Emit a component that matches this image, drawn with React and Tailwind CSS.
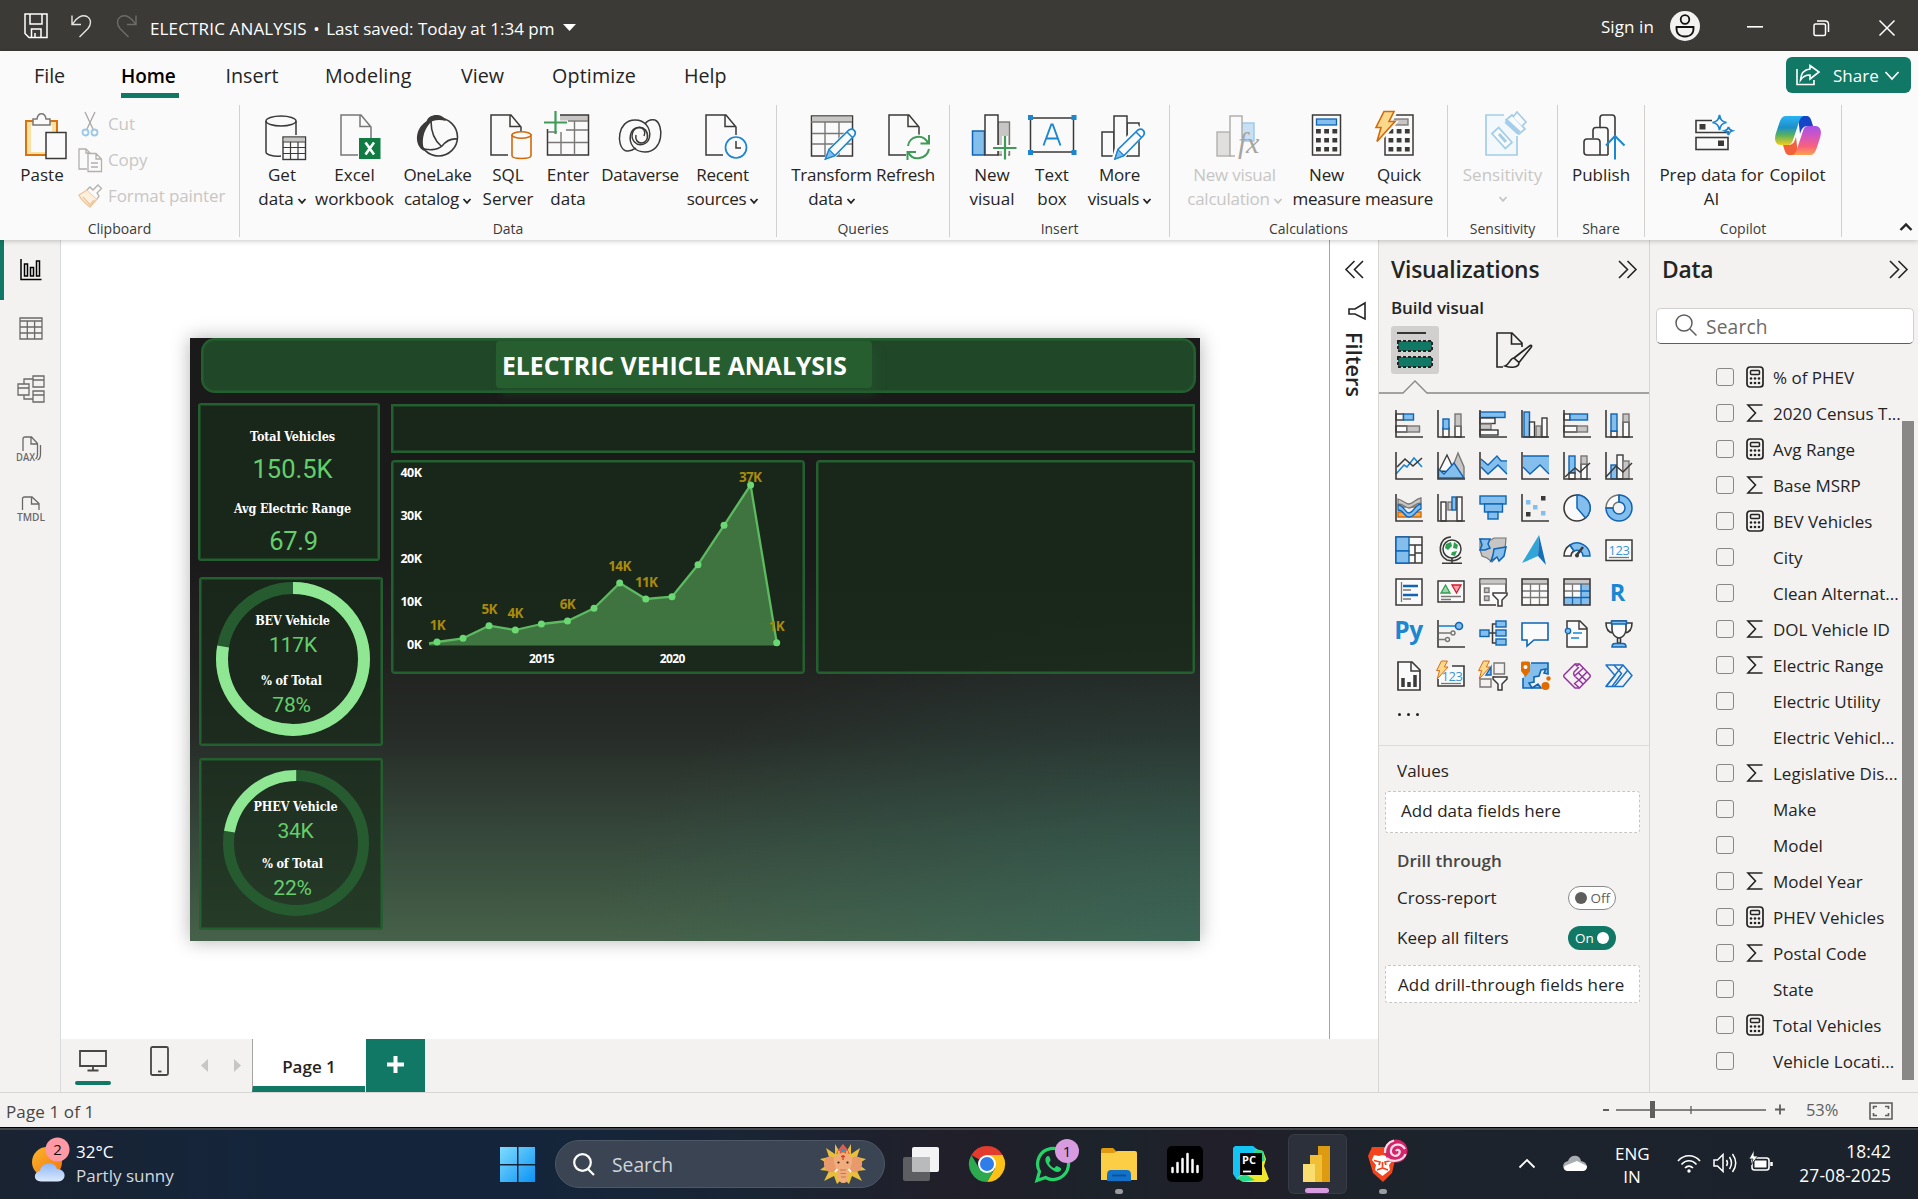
import React from "react";

const D = "#3b3a39";
const BF = "#83beec";
const BS = "#0f64b4";
const GF = "#c8c6c4";
const GS = "#797775";
const W = "#fafafa";

/* ---------- small shared pieces ---------- */

function Svg({ w, h, vb, className = "", children, ...rest }) {
  return (
    <svg width={w} height={h} viewBox={vb || `0 0 ${w} ${h}`} fill="none" className={`block shrink-0 overflow-visible ${className}`} {...rest}>
      {children}
    </svg>
  );
}

function Chevron({ className = "" }) {
  return (
    <Svg w={8} h={6} className={className} stroke="currentColor" strokeWidth="1.8">
      <path d="M0.5 1 L4 4.8 L7.5 1" />
    </Svg>
  );
}

function DoubleChevron({ flip }) {
  return (
    <Svg w={19} h={19} className={flip ? "-scale-x-100" : ""} stroke="#252423" strokeWidth="1.6">
      <path d="M1 1 L9.5 9.5 L1 18 M9.5 1 L18 9.5 L9.5 18" />
    </Svg>
  );
}

/* ---------- ribbon icons, drawn on a 48px grid ---------- */

const Page = ({ x = 8, c = D }) => (
  <path d={`M${x + 30} 26 V15 L${x + 20} 3 H${x} V43 H${x + 17} M${x + 19} 3 V14.500 H${x + 30}`} stroke={c} strokeWidth="1.5" fill={W} />
);

const Bolt = ({ x = 0, y = 0, s = 1 }) => (
  <path transform={`translate(${x} ${y}) scale(${s})`} d="M9 0 H19 L14 10 H20 L2 30 L6 16 H1 Z" fill="#fbd98c" stroke="#d4690b" strokeWidth="1.6" />
);

const ribbonIcons = {
  getData: (
    <>
      <path d="M8 9 V40 C8 42.500 15 45 23 44 M38 9 V23" stroke={D} strokeWidth="1.5" />
      <ellipse cx="23" cy="9" rx="15" ry="5" stroke={D} strokeWidth="1.5" />
      <rect x="25" y="25" width="22.500" height="22.500" fill={W} stroke={D} strokeWidth="1.4" />
      <rect x="25.700" y="25.700" width="21" height="4" fill={GF} />
      <path d="M25 30 H47.500 M25 35.500 H47.500 M25 41.500 H47.500 M32.500 30 V47.500 M40 30 V47.500" stroke={D} strokeWidth="1.2" />
    </>
  ),
  excel: (
    <>
      <Page x={10} c={GS} />
      <rect x="28" y="26" width="21.500" height="21" fill="#107c41" />
      <path d="M34.500 30.500 L43 42.500 M43 30.500 L34.500 42.500" stroke="#fff" strokeWidth="2.600" />
    </>
  ),
  oneLake: (
    <>
      <circle cx="24.500" cy="25" r="19" stroke={D} strokeWidth="1.6" />
      <path d="M12.500 9.500 C15 1 29 1 32 9 C25 7 18 8 13.500 12.500 Z" fill={D} />
      <path d="M14 9 C1 14 -1 34 10.500 39 C7 30 9 18 17 10 Z" fill={D} />
      <path d="M17 9 C17 21 21 29 27.500 34.500 M43.500 27 C36 26 32 29 28 34 C23 38.500 14 38.500 7 36" stroke={D} strokeWidth="1.6" />
    </>
  ),
  sql: (
    <>
      <Page x={7} />
      <path d="M28 23 V43.500 C28 47.500 47 47.500 47 43.500 V23 Z" fill={W} stroke="#d4690b" strokeWidth="1.6" />
      <ellipse cx="37.500" cy="23" rx="9.500" ry="3.200" fill={W} stroke="#d4690b" strokeWidth="1.6" />
    </>
  ),
  enter: (
    <>
      <rect x="3.500" y="3" width="41" height="40" fill={W} />
      <rect x="16" y="3" width="28" height="5.500" fill={GF} />
      <path d="M16 3 H44.500 V43 H3.500 V17" stroke={D} strokeWidth="1.5" />
      <path d="M24 9 H44 M22 18 H44 M4 30.500 H44 M17 20 V43 M30.500 9 V43 M4 20 H13" stroke={GS} strokeWidth="1.4" />
      <path d="M0 10.500 H23 M11.500 -1 V22" stroke="#3f9b57" strokeWidth="2.200" />
    </>
  ),
  dataverse: (
    <g stroke={D} strokeWidth="1.500">
      <path d="M9 38.500 C0 34 1 8 19 8 C29 8 35 16 33.500 25 C32 33 23 35 18.500 30 C14 25 16 16 23 15.500 C28 15.500 30 20 28 24" />
      <path d="M39 8 C48 12 48 40 29 40 C19 40 12.500 32 14.500 23 C16 15 25 13 29.500 18 C33 23 32 30 26 31 C21 31 19 27 20 23" />
      <path d="M9 38.500 C14 40.500 17 38 20 36 M39 8 C34 7 31 9 29 12" />
    </g>
  ),
  recent: (
    <>
      <Page x={7} />
      <circle cx="37" cy="35.500" r="12.500" fill={W} />
      <circle cx="37" cy="35.500" r="10.500" fill={W} stroke="#1c86d1" strokeWidth="1.7" />
      <path d="M37 29 V36 H42" stroke={D} strokeWidth="1.5" />
    </>
  ),
  transform: (
    <>
      <rect x="3.500" y="4" width="41" height="40" fill={W} stroke={D} strokeWidth="1.5" />
      <rect x="4" y="4.500" width="40" height="5.500" fill={GF} />
      <path d="M3 10 H44 M4 21.500 H44 M4 32 H44 M17 10 V43 M31 10 V43" stroke={GS} strokeWidth="1.4" />
      <path d="M16 48 L20 37 L41 16 L48 21 L28 45 Z" fill={W} />
      <path d="M17.500 47 L21 37.500 L41 18 C45 15.500 49 19.500 46.500 23.500 L27 43.500 Z M39 20 L44.500 25.500" stroke="#1c86d1" strokeWidth="1.6" fill={W} />
      <path d="M17.500 47 L21 37.500 L27 43.500 Z" fill={BF} stroke="#1c86d1" strokeWidth="1.2" />
    </>
  ),
  refresh: (
    <>
      <Page x={7} />
      <circle cx="36" cy="36" r="13.500" fill={W} />
      <path d="M26 34 C27 24 41 21 46 31 M47 23 V31.500 H38.500 M47 37 C45 47 31 50 26.500 40.500 M25.500 48 V40 H34" stroke="#3f9b57" strokeWidth="2" />
    </>
  ),
  newVisual: (
    <>
      <rect x="4.500" y="19" width="12" height="24" fill={BF} stroke={BS} strokeWidth="1.5" />
      <rect x="30" y="10" width="11.500" height="33" fill={GF} stroke={GS} strokeWidth="1.4" />
      <rect x="17" y="3" width="13" height="40" fill={W} stroke={D} strokeWidth="1.5" />
      <path d="M25 36 H48 M37 24 V48" stroke={W} strokeWidth="6" />
      <path d="M25 36 H48.500 M37 24 V47.500" stroke="#3f9b57" strokeWidth="2.200" />
    </>
  ),
  textBox: (
    <>
      <rect x="2.500" y="6" width="43" height="34" stroke={D} strokeWidth="1.5" />
      <g fill="#1c86d1">
        <rect x="0" y="3" width="5" height="5" /><rect x="43.500" y="3" width="5" height="5" />
        <rect x="0" y="38" width="5" height="5" /><rect x="43.500" y="38" width="5" height="5" />
      </g>
      <path d="M15.500 33.500 L23.300 12.500 H24.700 L32.500 33.500 M18 26.500 H30" stroke="#1c86d1" strokeWidth="1.9" />
    </>
  ),
  moreVisuals: (
    <>
      <rect x="6" y="20" width="12" height="24" stroke={D} strokeWidth="1.5" />
      <rect x="31" y="11" width="12" height="33" stroke={D} strokeWidth="1.5" />
      <rect x="18" y="4" width="13" height="40" fill={W} stroke={D} strokeWidth="1.5" />
      <path d="M15 49 L19 36 L42 13 L50 21 L29 46 Z" fill={W} />
      <path d="M19 47 L22 37.500 L42 18 C46 15.500 50 19.500 47.500 23.500 L28 43.500 Z M40 20 L45.500 25.500" stroke="#1c86d1" strokeWidth="1.6" fill={W} />
      <path d="M19 47 L22 37.500 L28 43.500 Z" fill={BF} stroke="#1c86d1" strokeWidth="1.2" />
    </>
  ),
  newCalc: (
    <>
      <rect x="6" y="20" width="13" height="24" fill="#e1dfdd" stroke="#b3b0ad" strokeWidth="1.4" />
      <rect x="31" y="11" width="12" height="18" fill="#c7e0f4" stroke="#9cc7e8" strokeWidth="1.4" />
      <path d="M19 44 V4 H31 V26" stroke="#b3b0ad" strokeWidth="1.5" fill={W} />
      <path d="M18.300 44 H24" stroke="#b3b0ad" strokeWidth="1.5" />
      <text x="27" y="41" fill="#a6a4a2" fontSize="30" fontStyle="italic" fontFamily="Liberation Serif, serif">fx</text>
    </>
  ),
  newMeasure: (
    <>
      <rect x="9.500" y="3" width="28" height="40" stroke={D} strokeWidth="1.5" />
      <rect x="13.500" y="7" width="20" height="6" fill={BF} stroke={BS} strokeWidth="1.3" />
      <g fill={D}>
        {[17, 26, 35].map((y) => [13, 21.200, 29.400].map((x) => <rect key={`${x}-${y}`} x={x} y={y} width="4.800" height="4.500" />))}
      </g>
    </>
  ),
  quickMeasure: (
    <>
      <rect x="10" y="3" width="28" height="40" stroke={D} strokeWidth="1.5" />
      <rect x="15" y="7" width="18" height="6" fill={GF} stroke={GS} strokeWidth="1.3" />
      <g fill={D}>
        {[17, 26, 35].map((y) => [13.500, 21.700, 29.900].map((x) => <rect key={`${x}-${y}`} x={x} y={y} width="4.800" height="4.500" />))}
      </g>
      <path d="M5 -3 H24 L18 9 H24 L4 32 H-3 Z" fill={W} />
      <Bolt x={0} y={-0.5} s={1} />
    </>
  ),
  sensitivity: (
    <g stroke="#a3cde8" strokeWidth="1.7">
      <path d="M25 3 H7 V43 H38 V24" fill="#f3f8fc" />
      <rect x="-4.500" y="-10" width="9" height="20" transform="translate(23 26) rotate(-42)" fill={W} />
      <path d="M20 22 L27 30" strokeWidth="3" />
      <path d="M27 8 L33 3 L46 17 L40 22 Z" fill={W} />
      <path d="M27 9 L40 21" strokeWidth="4.500" />
      <path d="M34 5 L38 0 L47 10 L43 14" fill={W} />
    </g>
  ),
  publish: (
    <g strokeWidth="1.6">
      <path d="M16 26 V18.500 Q16 15.500 19 15.500 H23 V6 Q23 3 26 3 H35 Q38 3 38 6 V24" stroke={D} />
      <path d="M23 15.500 H28 Q31 15.500 31 18.500 V43 M7 30 Q7 27 10 27 H20 Q23 27 23 30 V43 H10 Q7 43 7 40 Z M23 43 H31" stroke={D} />
      <path d="M38 47.500 V24 M29 33.500 L38 24 L47.500 33.500" stroke="#1c86d1" strokeWidth="2" />
    </g>
  ),
  prep: (
    <g>
      <path d="M24 8.500 H8 V20.500 H40 V19" stroke={D} strokeWidth="1.6" />
      <rect x="8" y="25.500" width="32" height="12" stroke={D} strokeWidth="1.6" />
      <rect x="11.500" y="12" width="6" height="5.500" fill={D} />
      <rect x="30" y="28.500" width="6" height="5.500" fill={D} />
      <path d="M31.500 3 C32.500 8 34 9.500 38.500 10.500 C34 11.500 32.500 13 31.500 18 C30.500 13 29 11.500 24.500 10.500 C29 9.500 30.500 8 31.500 3 Z M40.500 15 C41 17.500 42 18 44.500 18.800 C42 19.500 41 20.500 40.500 23 C40 20.500 39 19.500 36.500 18.800 C39 18 40 17.500 40.500 15 Z" stroke="#1c86d1" strokeWidth="1.7" />
    </g>
  ),
  copilot: (
    <>
      <defs>
        <linearGradient id="cpA" x1="0" y1="0" x2="0" y2="1">
          <stop offset="0" stopColor="#2ab4f4" /><stop offset=".4" stopColor="#1d8fc8" /><stop offset=".65" stopColor="#55b060" /><stop offset="1" stopColor="#f2cc20" />
        </linearGradient>
        <linearGradient id="cpB" x1="0" y1="0" x2="0" y2="1">
          <stop offset="0" stopColor="#a452e8" /><stop offset=".4" stopColor="#d857b8" /><stop offset=".7" stopColor="#f8607c" /><stop offset="1" stopColor="#fba350" />
        </linearGradient>
      </defs>
      <path d="M24 4 H32 C35.500 4 36.500 6 37.500 9 L39 14 H34 C29 14 27.500 17 26 22 Z" fill="#1646c8" />
      <path d="M24 43 H16 C12.500 43 11.500 41 10.500 38 L9 33 H14 C19 33 20.500 30 22 25 Z" fill="#f2603c" />
      <path d="M12 4 H30 C27 4.500 26 7 25 10 L19 28 C18 31.500 16.500 33 13 33 H7 C1 33 0 27 2 21 L6 9 C7.500 5.500 9 4 12 4 Z" fill="url(#cpA)" />
      <path d="M36 43 H18 C21 42.500 22 40 23 37 L29 19 C30 15.500 31.500 14 35 14 H41 C47 14 48 20 46 26 L42 38 C40.500 41.500 39 43 36 43 Z" fill="url(#cpB)" />
    </>
  ),
};

function RibbonButton({ icon, lines, width, drop, disabled, tight }) {
  return (
    <div className={`flex shrink-0 flex-col items-center text-[17px] leading-6 ${width} ${tight ? "tracking-[-0.25px]" : ""} ${disabled ? "text-[#c8c6c4]" : "text-[#252423]"}`}>
      <Svg w={48} h={48}>{ribbonIcons[icon]}</Svg>
      <div className="mt-[3px] flex flex-col items-center whitespace-nowrap">
        {lines.map((l, i) => (
          <div key={i} className="flex h-6 items-center">
            {l}
            {drop && i === lines.length - 1 && <Chevron className={l ? "mt-1 ml-1" : ""} />}
          </div>
        ))}
      </div>
    </div>
  );
}

function Group({ label, width, pad, children }) {
  return (
    <div className={`flex h-full shrink-0 flex-col border-r border-[#d2d0ce] ${width}`}>
      <div className={`flex h-[114px] shrink-0 pt-[7px] ${pad}`}>{children}</div>
      <div className="text-center text-[14px] leading-[19px] text-[#3b3a39]">{label}</div>
    </div>
  );
}

function TitleBar() {
  return (
    <header className="flex h-[51px] shrink-0 items-center bg-[#3b3a37] text-[17px] text-white">
      <Svg w={24} h={26} className="ml-6" stroke="#fff" strokeWidth="1.5">
        <path d="M1 1 H23 V24.500 H5 L1 20.500 Z M6 1 V11 H18 V1 M7.500 24 V16 H17 V24 M11 20 V24" />
      </Svg>
      <Svg w={22} h={24} className="ml-[23px]" stroke="#e6e6e6" strokeWidth="1.4">
        <path d="M1 1.500 V10.500 H10 M1.500 10 C5 4 11 0 16 2.500 C21 5.500 20 11 17 14.500 L8.500 23" />
      </Svg>
      <Svg w={22} h={24} className="ml-[22px] -scale-x-100" stroke="#6e6d6b" strokeWidth="1.4">
        <path d="M1 1.500 V10.500 H10 M1.500 10 C5 4 11 0 16 2.500 C21 5.500 20 11 17 14.500 L8.500 23" />
      </Svg>
      <div className="ml-[13px] flex w-[409px] gap-[6.500px] pt-[7px] whitespace-nowrap">
        <span className="tracking-[0.15px]">ELECTRIC ANALYSIS</span>
        <span>•</span>
        <span>Last saved: Today at 1:34 pm</span>
      </div>
      <Svg w={13} h={7} className="mt-1 ml-1"><path d="M0 0 H13 L6.500 7 Z" fill="#fff" /></Svg>
      <div className="flex-1" />
      <span className="mt-[2px] mr-4 tracking-[0.1px]">Sign in</span>
      <Svg w={30} h={30}>
        <circle cx="15" cy="15" r="15" fill="#f3f2f1" />
        <circle cx="15" cy="8.500" r="4.300" stroke="#111" strokeWidth="1.8" />
        <path d="M6.500 16 H23.500 C24 22 21 25.500 15 25.500 C9 25.500 6 22 6.500 16 Z" stroke="#111" strokeWidth="1.8" />
      </Svg>
      <Svg w={16} h={2} className="mt-[2px] ml-[47px]"><rect width="16" height="1.6" fill="#fff" /></Svg>
      <Svg w={16} h={16} className="mt-1 ml-[50px]" stroke="#fff" strokeWidth="1.5">
        <rect x="1" y="4" width="11.500" height="11.500" rx="1.500" /><path d="M4 1 H12 Q15.500 1 15.500 4.500 V12" />
      </Svg>
      <Svg w={16} h={16} className="mt-1 mr-[23px] ml-[50px]" stroke="#fff" strokeWidth="1.5"><path d="M0.500 0.500 L15.500 15.500 M15.500 0.500 L0.500 15.500" /></Svg>
    </header>
  );
}

const tabs = [
  ["File", "ml-[34px] w-[87px]"],
  ["Home", "w-[104.5px]"],
  ["Insert", "w-[99.5px]"],
  ["Modeling", "w-[136px] tracking-[0.15px]"],
  ["View", "w-[91px]"],
  ["Optimize", "w-[132px] tracking-[0.15px]"],
  ["Help", ""],
];

function SmallAction({ icon, label }) {
  return (
    <div className="flex h-9 items-center whitespace-nowrap">
      <div className="w-[30px]">{icon}</div>
      {label}
    </div>
  );
}

function Ribbon() {
  return (
    <section className="relative z-10 flex h-[189px] shrink-0 flex-col bg-[#fafafa] shadow-[0_1px_5px_rgba(0,0,0,0.22)]">
      <div className="flex h-[54px] items-start">
        <nav className="flex pt-[7px] text-[19.700px] leading-[36px] text-[#252423]">
          {tabs.map(([t, w]) => (
            <div key={t} className={w}>
              {t === "Home" ? (
                <div className="h-[40px] w-[58px] border-b-[5px] border-[#117865] text-[19px] font-semibold text-black">
                  <span className="tracking-[-0.1px]">Home</span>
                </div>
              ) : t}
            </div>
          ))}
        </nav>
        <div className="mt-[6px] mr-[7px] ml-auto flex h-9 w-[125px] items-center rounded-md bg-[#117865] pl-[10px] text-[17px] text-white">
          <Svg w={24} h={22} stroke="#fff" strokeWidth="1.6">
            <path d="M1 5 V20.500 H18 V16 M14 1.500 L23 8 L14 15 V11 C9 11 6.500 13 4.500 16 C5 9.500 8 5.500 14 5 Z" />
          </Svg>
          <span className="mt-[2px] ml-[13px]">Share</span>
          <Svg w={14} h={9} className="ml-[6px]" stroke="#fff" strokeWidth="1.7"><path d="M0.500 1 L7 8 L13.500 1" /></Svg>
        </div>
      </div>
      <div className="flex h-[132px]">
        <Group label="Clipboard" width="w-[240px]" pad="">
          <div className="flex w-[78px] flex-col items-center pl-[6px] text-[17px] leading-6 text-[#252423]">
            <Svg w={42} h={48} className="ml-[7px]">
              <rect x="1" y="9" width="31" height="34" fill="#fbe0a4" stroke="#d9730d" strokeWidth="2" />
              <rect x="6" y="13" width="21" height="27" fill={W} />
              <path d="M8 13 V7 H12 C13 0 20 0 21 7 H25 V13 Z" fill={W} stroke={GS} strokeWidth="1.5" />
              <rect x="21" y="20.500" width="20" height="26" fill={W} stroke={D} strokeWidth="1.5" />
            </Svg>
            <div className="mt-[3px]">Paste</div>
          </div>
          <div className="-mt-[6px] text-[17px] tracking-[-0.1px] text-[#c8c6c4]">
            <SmallAction label="Cut" icon={
              <Svg w={24} h={24} strokeWidth="1.3">
                <path d="M7 0 L15 17 M17 0 L9 17" stroke="#a9a7a5" /><circle cx="7.500" cy="20.500" r="3" stroke="#9cc7e8" strokeWidth="1.8" /><circle cx="16.500" cy="20.500" r="3" stroke="#9cc7e8" strokeWidth="1.8" />
              </Svg>} />
            <SmallAction label="Copy" icon={
              <Svg w={24} h={24} stroke="#b3b0ad" strokeWidth="1.3">
                <path d="M9 21 H1 V1 H8 L12 5 V6 M8 1 V5 H12 M10 5.500 H18 L23.500 11 V23.500 H10 Z M18 6 V11 H23 M13 15 H20 M13 19 H20" />
              </Svg>} />
            <SmallAction label="Format painter" icon={
              <Svg w={24} h={24} strokeWidth="1.3">
                <path d="M1 11 L9 6 L19 15 L12 23 C8 20 3 16 1 11 Z" fill="#fdf0dc" stroke="#efc39a" /><path d="M5 13 L12 21 L16 16" stroke="#efc39a" />
                <path d="M9 6 L12 3 L15 6 L20 1 L23.500 4.500 L19 9 L21 12 L19 15" fill={W} stroke="#b3b0ad" />
              </Svg>} />
          </div>
        </Group>
        <Group label="Data" width="w-[537px]" pad="pl-[7px]">
          <RibbonButton icon="getData" lines={["Get", "data"]} width="w-[70px]" drop />
          <RibbonButton icon="excel" lines={["Excel", "workbook"]} width="w-[75px]" />
          <RibbonButton icon="oneLake" lines={["OneLake", "catalog"]} width="w-[91px]" drop tight />
          <RibbonButton icon="sql" lines={["SQL", "Server"]} width="w-[50px]" />
          <RibbonButton icon="enter" lines={["Enter", "data"]} width="w-[70px]" />
          <RibbonButton icon="dataverse" lines={["Dataverse"]} width="w-[74px]" tight />
          <RibbonButton icon="recent" lines={["Recent", "sources"]} width="w-[91px]" drop tight />
        </Group>
        <Group label="Queries" width="w-[173px]" pad="pl-[9px]">
          <RibbonButton icon="transform" lines={["Transform", "data"]} width="w-[91px]" drop tight />
          <RibbonButton icon="refresh" lines={["Refresh"]} width="w-[57px]" tight />
        </Group>
        <Group label="Insert" width="w-[220px]" pad="pl-[12px]">
          <RibbonButton icon="newVisual" lines={["New", "visual"]} width="w-[60px]" />
          <RibbonButton icon="textBox" lines={["Text", "box"]} width="w-[60px]" />
          <RibbonButton icon="moreVisuals" lines={["More", "visuals"]} width="w-[75px]" drop tight />
        </Group>
        <Group label="Calculations" width="w-[278px]" pad="pl-[10px]">
          <RibbonButton icon="newCalc" lines={["New visual", "calculation"]} width="w-[109px]" drop disabled tight />
          <RibbonButton icon="newMeasure" lines={["New", "measure"]} width="w-[75px]" tight />
          <RibbonButton icon="quickMeasure" lines={["Quick", "measure"]} width="w-[70px]" tight />
        </Group>
        <Group label="Sensitivity" width="w-[110px]" pad="justify-center">
          <RibbonButton icon="sensitivity" lines={["Sensitivity", ""]} width="w-[90px]" drop disabled />
        </Group>
        <Group label="Share" width="w-[87px]" pad="justify-center">
          <RibbonButton icon="publish" lines={["Publish"]} width="w-[80px]" />
        </Group>
        <Group label="Copilot" width="w-[197px]" pad="pl-[11px]">
          <RibbonButton icon="prep" lines={["Prep data for", "AI"]} width="w-[111px]" />
          <RibbonButton icon="copilot" lines={["Copilot"]} width="w-[61px]" />
        </Group>
        <Svg w={12} h={8} className="mt-[118px] ml-[58px]" stroke="#252423" strokeWidth="2.400"><path d="M0.500 7 L6 1.500 L11.500 7" /></Svg>
      </div>
    </section>
  );
}

/* ---------- left navigation ---------- */

function SideNav() {
  return (
    <aside className="flex w-[61px] shrink-0 flex-col border-r border-[#d8dbde] bg-[#f3f2f1]">
      <div className="flex h-[60px] items-center border-l-4 border-[#117865] pl-4">
        <Svg w={22} h={22} stroke="#000" strokeWidth="1.500">
          <path d="M1 0 V20.500 H21.500 M4.500 5 H7.500 V17 H4.500 Z M10.500 8.500 H13.500 V17 H10.500 Z M16.500 2 H19.500 V17 H16.500 Z" />
        </Svg>
      </div>
      <div className="flex h-[56px] items-center pl-[19px]">
        <Svg w={24} h={23} stroke="#6b6968" strokeWidth="1.3">
          <path d="M1 1 H23 V22 H1 Z M1 4 H23 M1 10 H23 M1 16 H23 M8.300 4 V22 M15.600 4 V22" />
        </Svg>
      </div>
      <div className="flex h-[66px] items-center pl-[17px]">
        <Svg w={28} h={28} stroke="#6b6968" strokeWidth="1.3">
          <path d="M1 9 H12 V20 H1 Z M1 13 H12 M16 1 H27 V12 H16 Z M16 5 H27 M16 16 H27 V27 H16 Z M16 20 H27 M7 9 V4 H16 M7 20 V24 H16" />
        </Svg>
      </div>
      <div className="flex h-[54px] items-center pl-[16px]">
        <Svg w={28} h={26} stroke="#6b6968" strokeWidth="1.3">
          <path d="M7 15 V3 Q7 1 9 1 H15.500 L21.500 7.500 V18 Q21.500 22 19.500 23 M15 1 V8 H21.500 M24.500 9 V18 Q24.500 23 21.500 24" />
          <text x="0" y="24.500" fontSize="10.500" fill="#6b6968" stroke="none" fontWeight="600" fontFamily="Open Sans, sans-serif" textLength="19" lengthAdjust="spacingAndGlyphs">DAX</text>
        </Svg>
      </div>
      <div className="mt-[3px] flex h-[60px] items-center pl-[17px]">
        <Svg w={28} h={26} stroke="#6b6968" strokeWidth="1.3">
          <path d="M5.500 14 V3 Q5.500 1 7.500 1 H15 L22 7.500 V14 M14.500 1 V8 H22" />
          <text x="0" y="24.500" fontSize="10.500" fill="#6b6968" stroke="none" fontWeight="600" fontFamily="Open Sans, sans-serif" textLength="28" lengthAdjust="spacingAndGlyphs">TMDL</text>
        </Svg>
      </div>
    </aside>
  );
}

/* ---------- report canvas ---------- */

const card = "border-2 border-[#245f2f] bg-[rgba(24,43,26,0.69)] shadow-[inset_0_0_0_1px_rgba(36,95,47,0.5)]";
const serif = "font-['DejaVu_Serif_Condensed','DejaVu_Serif',serif] text-[12.5px] font-bold text-white tracking-[-0.15px]";
const din = "font-['Roboto',sans-serif] text-[#63cf6b]";

const pts = [
  [437, 642], [463, 638.300], [489, 625.700], [515.300, 630], [541.400, 624], [567.500, 621], [594, 608.300],
  [619.700, 583], [645.800, 599], [672, 596.700], [698, 564.700], [724, 525.300], [750.600, 485], [776.700, 642.700],
].map(([x, y]) => [x - 393, y - 462]);

const dataLabels = [
  ["1K", 438, 625], ["5K", 489.600, 609], ["4K", 515.700, 613.300], ["6K", 568, 604],
  ["14K", 620, 566.300], ["11K", 646.600, 582.300], ["37K", 750.600, 477], ["1K", 777, 626],
];

function AreaChart() {
  const line = `36,181.5 ${pts.map((p) => p.join(",")).join(" ")}`;
  return (
    <Svg w={410} h={210} fontFamily="Open Sans, sans-serif" fontSize="12.500" fontWeight="700">
      <polygon points={`36,183.500 ${line} 383.700,183.500`} fill="#5fb560" fillOpacity="0.55" />
      <polyline points={line} stroke="#5dba60" strokeWidth="2.300" strokeLinejoin="round" />
      {pts.map(([x, y], i) => <circle key={i} cx={x} cy={y} r="3.500" fill="#6bd873" />)}
      <g fill="#fff" textAnchor="end" letterSpacing="-0.5">
        {["40K", "30K", "20K", "10K", "0K"].map((t, i) => <text key={t} x="28.500" y={15 + i * 43.100}>{t}</text>)}
      </g>
      <g fill="#fff" textAnchor="middle" fontSize="12" letterSpacing="-0.6">
        <text x="148.600" y="201">2015</text>
        <text x="279.300" y="201">2020</text>
      </g>
      <g fill="#a98b0b" textAnchor="middle" fontSize="13.500" letterSpacing="-0.7">
        {dataLabels.map(([t, x, y], i) => <text key={i} x={x - 393.500} y={y - 462 + 4.700}>{t}</text>)}
      </g>
    </Svg>
  );
}

function Donut({ size, stroke, value, start = 0 }) {
  const r = (size - stroke) / 2;
  const c = 2 * Math.PI * r;
  const mid = size / 2;
  return (
    <Svg w={size} h={size}>
      <circle cx={mid} cy={mid} r={r} stroke="#265a2f" strokeWidth={stroke} />
      <circle cx={mid} cy={mid} r={r} stroke="#8fe793" strokeWidth={stroke}
        transform={`rotate(${start * 360 - 90} ${mid} ${mid})`} strokeDasharray={`${c * value} ${c}`} />
    </Svg>
  );
}

function Report() {
  return (
    <div className="flex h-[603px] w-[1010px] flex-col bg-[radial-gradient(ellipse_60%_56%_at_100%_100%,rgba(52,104,96,0.55)_0%,rgba(52,104,96,0.24)_50%,rgba(52,104,96,0)_100%),linear-gradient(to_bottom,#1a1a1a_0%,#1a1a1a_36%,#212321_54%,#272c28_66%,#35463a_82%,#466149_100%)] shadow-[0_0_18px_rgba(0,0,0,0.3)]">
      <div className="ml-[11px] flex h-[55px] w-[995px] rounded-[14px] border-2 border-[#245f2f] bg-[#214729] shadow-[inset_0_0_0_1px_rgba(36,95,47,0.6)]">
        <div className="mt-[1px] ml-[293px] flex h-[47px] w-[376px] items-center rounded bg-[#265e30] pt-[3px] pl-[6px] text-[24.750px] font-bold whitespace-nowrap text-white shadow-[5px_8px_10px_rgba(38,94,48,0.3)]">
          ELECTRIC VEHICLE ANALYSIS
        </div>
      </div>
      <div className="flex">
        <div className="ml-2 flex w-[193px] flex-col pt-[10px]">
          <div className={`flex h-[158px] w-[182px] flex-col items-center rounded-[3px] pl-[7px] ${card}`}>
            <div className={`mt-[20px] leading-[24px] ${serif}`}>Total Vehicles</div>
            <div className={`mt-[7px] text-[25.500px] leading-[26px] ${din}`}>150.5K</div>
            <div className={`mt-[15px] leading-[24px] ${serif}`}>Avg Electric Range</div>
            <div className={`mt-[7px] ml-[2px] text-[25.500px] leading-[26px] tracking-[-0.3px] ${din}`}>67.9</div>
          </div>
          <div className={`mt-[16px] ml-[1px] grid h-[169px] w-[184px] rounded-[3px] ${card}`}>
            <div className="col-start-1 row-start-1 mt-[3px] ml-[15px]"><Donut size={154} stroke={12} value={0.777} /></div>
            <div className="z-10 col-start-1 row-start-1 flex flex-col items-center pr-[1px] pl-[4px]">
              <div className={`mt-[30px] leading-[24px] ${serif}`}>BEV Vehicle</div>
              <div className={`mt-[1px] ml-[1px] text-[21px] leading-[22px] tracking-[-0.2px] ${din}`}>117K</div>
              <div className={`mt-[13px] mr-[2px] leading-[24px] ${serif}`}>% of Total</div>
              <div className={`mt-[1px] mr-[2px] text-[21px] leading-[22px] tracking-[-0.2px] ${din}`}>78%</div>
            </div>
          </div>
          <div className={`mt-[12px] ml-[1px] grid h-[172px] w-[184px] rounded-[3px] ${card}`}>
            <div className="col-start-1 row-start-1 mt-[10px] ml-[22px]"><Donut size={146} stroke={11} value={0.223} start={0.777} /></div>
            <div className="z-10 col-start-1 row-start-1 flex flex-col items-center pl-[9px]">
              <div className={`mt-[35px] leading-[24px] ${serif}`}>PHEV Vehicle</div>
              <div className={`mt-[1px] text-[21px] leading-[22px] tracking-[-0.2px] ${din}`}>34K</div>
              <div className={`mt-[10px] mr-[6px] leading-[24px] ${serif}`}>% of Total</div>
              <div className={`mt-[1px] mr-[6px] text-[21px] leading-[22px] tracking-[-0.2px] ${din}`}>22%</div>
            </div>
          </div>
        </div>
        <div className="w-[804px] pt-[11px]">
          <div className={`h-[49px] ${card}`} />
          <div className="mt-[7px] flex justify-between">
            <div className={`h-[214px] w-[414px] rounded ${card}`}><AreaChart /></div>
            <div className={`h-[214px] w-[379px] rounded ${card}`} />
          </div>
        </div>
      </div>
    </div>
  );
}

function PageTabs() {
  return (
    <div className="flex h-[53px] shrink-0 bg-[#f3f2f1]">
      <div className="ml-[14px] flex w-[36px] flex-col items-center">
        <Svg w={28} h={22} className="mt-[11px]" stroke="#484644" strokeWidth="1.800">
          <path d="M1 1 H27 V16 H1 Z M14 16 V20.500 M8.500 20.500 H19.500" />
        </Svg>
        <div className="mt-[9px] h-1 w-[36px] rounded-sm bg-[#117865]" />
      </div>
      <Svg w={19} h={30} className="mt-[7px] ml-[39px]" stroke="#484644" strokeWidth="1.800">
        <rect x="1" y="1" width="17" height="28" rx="1.500" /><path d="M8 25.500 H11.500" />
      </Svg>
      <Svg w={7} h={14} className="mt-5 ml-[32px]"><path d="M7 0 V13 L0 6.500 Z" fill="#c8c6c4" /></Svg>
      <Svg w={7} h={14} className="mt-5 ml-[26px]"><path d="M0 0 V13 L7 6.500 Z" fill="#c8c6c4" /></Svg>
      <div className="ml-[11px] flex w-[113px] justify-center border-b-[6px] border-l border-[#117865] border-l-[#a6a4a2] bg-white pt-[15px] text-[17px] leading-[26px] font-semibold text-[#252423]">
        Page 1
      </div>
      <div className="flex w-[60px] items-center justify-center border-l border-white bg-[#117865]">
        <Svg w={17} h={17} className="-mt-[2px]"><path d="M8.500 0 V17 M0 8.500 H17" stroke="#fff" strokeWidth="4" /></Svg>
      </div>
    </div>
  );
}

/* ---------- visualization gallery, each icon on a 28px grid ---------- */

const Axes = () => <path d="M1 0 V27 H28" stroke={D} strokeWidth="1.600" />;
const R = ({ x, y, w, h, k = "w" }) => (
  <rect x={x} y={y} width={w} height={h}
    fill={k === "b" ? BF : k === "g" ? GF : W}
    stroke={k === "b" ? BS : k === "g" ? GS : D} strokeWidth="1.400" />
);

const vizIcons = [
  <><R x={1} y={4} w={7.500} h={6} /><R x={8.500} y={4} w={10} h={6} k="b" /><R x={1} y={16} w={11} h={6} /><R x={12} y={16} w={12.500} h={6} k="g" /><Axes /></>,
  <><R x={6} y={18} w={6} h={9} /><R x={6} y={9} w={6} h={10} k="b" /><R x={18} y={16} w={6} h={11} /><R x={18} y={4} w={6} h={12} k="g" /><Axes /></>,
  <><R x={1} y={2} w={25} h={5.500} k="b" /><R x={1} y={8} w={15} h={5.500} /><R x={1} y={14} w={11} h={5.500} k="g" /><R x={1} y={20} w={18} h={5} /><Axes /></>,
  <><R x={3} y={2} w={5.500} h={25} k="b" /><R x={8.500} y={12} w={5} h={15} /><R x={15} y={16} w={5} h={11} k="g" /><R x={21} y={8} w={5} h={19} /><Axes /></>,
  <><R x={1} y={4} w={6} h={6} /><R x={7} y={4} w={17.500} h={6} k="b" /><R x={1} y={16} w={13} h={6} /><R x={14} y={16} w={10.500} h={6} k="g" /><Axes /></>,
  <><R x={6} y={21} w={6} h={6} /><R x={6} y={4} w={6} h={17} k="b" /><R x={18} y={12} w={6} h={15} /><R x={18} y={4} w={6} h={8} k="g" /><Axes /></>,
  <><path d="M1 22 L9 13 L12 15 L19 6 L27 15" stroke="#1c86d1" strokeWidth="1.600" /><path d="M2 15 L10 7 L18 14 L27 6" stroke={D} strokeWidth="1.600" /><Axes /></>,
  <><path d="M2 19 L10 3 L18 20 Z" fill={W} stroke={D} strokeWidth="1.400" /><path d="M16 14 L21 1 L27 15 V26 H18 Z" fill={GF} stroke={GS} strokeWidth="1.400" /><path d="M1.500 26 V17 L7 22 L17 11 L27 26 Z" fill={BF} stroke={BS} strokeWidth="1.400" /><Axes /></>,
  <><path d="M2 7 L9 13 L18 5 L22 10 H28 V23 L19 14 L9 23 L2 16 Z" fill={BF} /><path d="M2 7 L9 13 L18 4 L22 9 H28 M2 15 L9 22 L19 13 L28 22" stroke={BS} strokeWidth="1.400" /><Axes /></>,
  <><path d="M2 4 H28 V22 L19 13 L9 22 L2 15 Z" fill={BF} /><path d="M2 4 H28 M2 15 L9 22 L19 13 L28 22" stroke={BS} strokeWidth="1.400" /><Axes /></>,
  <><R x={6} y={4} w={6} h={17} k="b" /><R x={6} y={21} w={6} h={6} /><R x={18} y={12} w={6} h={15} /><R x={18} y={4} w={6} h={8} k="g" /><path d="M2 25 L12 16 L17 20 L27 11" stroke={D} strokeWidth="1.500" /><Axes /></>,
  <><R x={6} y={13} w={6} h={14} k="b" /><R x={12} y={3} w={6} h={24} /><R x={18} y={9} w={6} h={18} k="g" /><path d="M1 25 L11 14 L18 20 L27 11" stroke={D} strokeWidth="1.500" /><Axes /></>,
  <><path d="M3 18 H10 C14 22 16 22 19 18 H26 V23 H3 Z M3 13 H26" fill="#f7a94a" stroke="#d4690b" strokeWidth="1.400" /><path d="M3 5 C9 7 11 10 14 10 C18 10 20 5 26 4 V9 C20 9 18 14 14 14 C10 14 9 10 3 10 Z" fill={GF} stroke={GS} strokeWidth="1.300" /><path d="M3 11 C9 11 10 19 14 19 C19 19 19 11 26 10 V15 C21 16 20 23 14 23 C9 23 9 16 3 16 Z" fill={BF} stroke={BS} strokeWidth="1.300" /><Axes /></>,
  <><R x={4} y={8} w={5} h={19} /><R x={11} y={8} w={4} h={8} k="g" /><R x={15} y={3} w={4} h={13} k="b" /><R x={20} y={3} w={5} h={24} /><Axes /></>,
  <><R x={1} y={2} w={26} h={8} k="b" /><R x={5.500} y={10} w={18} h={8} k="b" /><R x={9} y={18} w={10} h={7} k="b" /></>,
  <><Axes /><rect x="5" y="6" width="4.500" height="4.500" fill={BF} /><rect x="12" y="11" width="4.500" height="4.500" fill={BF} /><rect x="20" y="17" width="4.500" height="4.500" fill={BF} /><rect x="20" y="2" width="4.500" height="4.500" fill={D} /><rect x="5" y="18" width="4.500" height="4.500" fill={D} /></>,
  <><circle cx="14" cy="14" r="13" fill={W} stroke={D} strokeWidth="1.600" /><path d="M14 1 A13 13 0 0 1 22.500 24 L14 14 Z" fill={BF} stroke={BS} strokeWidth="1.500" /></>,
  <><circle cx="14" cy="14" r="9.500" stroke={BF} strokeWidth="7" /><path d="M14 4.500 A9.500 9.500 0 0 0 4.500 14" stroke={W} strokeWidth="7" /><path d="M14 1 A13 13 0 0 0 1 14 H8 A6 6 0 0 1 14 8 Z" stroke={GS} strokeWidth="1.500" /><path d="M14 1 A13 13 0 1 1 1 14 H8 A6 6 0 1 0 14 8 Z" stroke={BS} strokeWidth="1.500" /></>,
  <><rect x="1" y="1" width="26" height="26" fill={W} stroke={D} strokeWidth="1.500" /><path d="M14 9 H27 M20 9 V27 M14 19 H20 M20 17 H27" stroke={D} strokeWidth="1.500" /><R x={1} y={1} w={13} h={14} k="b" /><R x={1} y={15} w={13} h={12} k="b" /></>,
  <><circle cx="15" cy="13" r="9" fill="#f8fdf9" stroke={D} strokeWidth="1.500" /><path d="M9 8 L14 6 L15 10 L11 14 L8 12 Z M17 6 L21 9 L20 13 L16 12 Z M15 16 L20 15 L18 20 L14 19 Z" fill="#2f9e52" /><path d="M14 1 C1 1 0 20 10 24 C14 25 20 25 24 21 M15 22 V27 M5 27.200 H25" stroke={D} strokeWidth="1.600" /></>,
  <><path d="M1 3 L12 4 L15 2 H27 L26 14 L22 22 L18 21 L13 26 L8 22 L3 20 L1 14 Z" fill={GF} stroke={GS} strokeWidth="1.200" /><path d="M1 3 L11 3 L9 8 L11 12 L6 14 H1 L3 9 Z M15 13 L27 11 L25 20 L20 25 L18 21 L12 25 L14 19 Z" fill={BF} stroke={BS} strokeWidth="1.500" /></>,
  <><path d="M18 -1 L1 27 L17 20 Z" fill="#2fa5d8" /><path d="M18 -1 L17 20 L25 29 Z" fill="#1470b8" /></>,
  <><path d="M1 20 A13 13 0 0 1 7 9 L11 15 A6 6 0 0 0 8 20 Z" fill={W} stroke={D} strokeWidth="1.500" /><path d="M7 9 A13 13 0 0 1 27 20 H20 A6 6 0 0 0 11 15 Z" fill={BF} stroke={BS} strokeWidth="1.500" /><path d="M20 11 L13 20" stroke={D} strokeWidth="2.500" /><circle cx="14" cy="19.500" r="2" fill={D} /></>,
  <><rect x="1" y="4" width="26" height="20.500" fill={W} stroke={D} strokeWidth="1.500" /><text x="14" y="18.500" textAnchor="middle" fontSize="13" fontFamily="Open Sans, sans-serif" fill="#3a96d6" letterSpacing="-.5">123</text><path d="M4 21.500 H24" stroke={GS} strokeWidth="1.300" /></>,
  <><rect x="1" y="1" width="26" height="26" fill={W} stroke={D} strokeWidth="1.500" /><path d="M6.500 4 V24 M8 12 H16 M8 21 H16" stroke={GS} strokeWidth="1.300" /><path d="M8 8 H23 M8 17 H23" stroke={BS} strokeWidth="2.600" /></>,
  <><rect x="1" y="3" width="26" height="21" fill={W} stroke={D} strokeWidth="1.500" /><path d="M4 15 L8.500 7 L13 15 Z" fill="#9ed6a8" stroke="#2f9e52" strokeWidth="1.300" /><path d="M15 7 H24 L19.500 15 Z" fill="#f7a3a8" stroke="#d9182d" strokeWidth="1.300" /><path d="M4 18.500 H24 M4 21.500 H14" stroke={GS} strokeWidth="1.300" /></>,
  <><path d="M17 27 H1 V1 H27 V14" fill={W} stroke={D} strokeWidth="1.500" /><rect x="1.500" y="1.500" width="25" height="4" fill={GF} /><path d="M1 6 H27" stroke={GS} strokeWidth="1.200" /><R x={5.500} y={10} w={4.500} h={4.500} k="g" /><R x={5.500} y={18} w={4.500} h={4.500} k="g" /><path d="M14 15 H28 V17 L23 22 V28 H19 V22 L14 17 Z" fill={W} stroke={D} strokeWidth="1.500" /></>,
  <><rect x="1" y="1" width="26" height="26" fill={W} /><rect x="1" y="1" width="26" height="5" fill={GF} /><path d="M1 6 H27 M1 13 H27 M1 19.500 H27 M9.500 6 V27 M18.500 6 V27" stroke={GS} strokeWidth="1.300" /><rect x="1" y="1" width="26" height="26" stroke={D} strokeWidth="1.600" /></>,
  <><rect x="1" y="1" width="26" height="26" fill={W} /><path d="M18 6 H27 V27 H1 V19.500 H18 Z" fill={BF} /><rect x="1" y="1" width="26" height="5" fill={GF} /><path d="M1 6 H27 M1 13 H18 M9.500 6 V19" stroke={GS} strokeWidth="1.300" /><path d="M18 6 V27 M1 19.500 H27 M18 13 H27 M9.500 19.500 V27" stroke={BS} strokeWidth="1.300" /><rect x="1" y="1" width="26" height="26" stroke={D} strokeWidth="1.600" /></>,
  <><text x="12.500" y="22.500" textAnchor="middle" fontSize="23.500" fontWeight="700" fontFamily="Open Sans, sans-serif" fill="#1c86d1">R</text></>,
  <><text x="13.500" y="19" textAnchor="middle" fontSize="24.500" fontWeight="700" fontFamily="Open Sans, sans-serif" fill="#1c86d1" letterSpacing="-.3">Py</text></>,
  <><Axes /><path d="M2 6 H19" stroke="#1c86d1" strokeWidth="1.600" /><circle cx="22" cy="6" r="3.500" fill={BF} stroke={BS} strokeWidth="1.600" /><path d="M2 13 H14 M2 19.500 H8" stroke={GS} strokeWidth="1.400" /><circle cx="16" cy="13" r="2" stroke={GS} strokeWidth="1.400" /><circle cx="10.500" cy="19.500" r="2" stroke={GS} strokeWidth="1.400" /></>,
  <><path d="M10 13 H17 M17 4 H13.500 V23 H17" stroke={D} strokeWidth="1.500" /><R x={1} y={10} w={9} h={6.500} k="b" /><R x={17} y={1} w={10} h={6} k="b" /><R x={17} y={10} w={10} h={6} k="b" /><R x={17} y={19} w={10} h={6} k="b" /></>,
  <path d="M1 3 H27 V20 H13 L6 26 V20 H1 Z" fill={W} stroke={BS} strokeWidth="1.600" />,
  <><path d="M4 8 V1 H17 L24 8 V27 H4 V14" fill={W} stroke={D} strokeWidth="1.500" /><path d="M16 1 V9 H24" stroke={D} strokeWidth="1.400" /><circle cx="5" cy="11" r="2.700" fill={BF} stroke={BS} strokeWidth="1.300" /><path d="M10 13 H19 M8 18 H16" stroke="#1c86d1" strokeWidth="1.300" /></>,
  <><path d="M7 1 H21 V10 Q20 17 14 18 Q8 17 7 10 Z M7 3 H1 Q1 12 8 13 M21 3 H27 Q27 12 20 13 M12.500 18 V23 H15.500 V18" fill={W} stroke={D} strokeWidth="1.600" /><path d="M6.500 1 H21.500 V4 H6.500 Z M7 27 Q7 23.500 10 23.500 H18 Q21 23.500 21 27 Z" fill={BF} stroke={BS} strokeWidth="1.500" /></>,
  <><path d="M3 0 H17 L25 8 V28 H3 Z" fill={W} stroke={D} strokeWidth="1.700" /><path d="M16 0 V9 H25" stroke={D} strokeWidth="1.500" /><path d="M8 25 V16 M14 25 V20 M20 25 V13" stroke={D} strokeWidth="3.500" /></>,
  <><path d="M15 4 H27 V24 H1 V17" fill={W} stroke={D} strokeWidth="1.600" /><text x="15" y="18.500" textAnchor="middle" fontSize="13" fontFamily="Open Sans, sans-serif" fill="#3a96d6" letterSpacing="-.5">123</text><path d="M4 21.500 H24" stroke={GS} strokeWidth="1.300" /><Bolt x={-1} y={-1} s={0.600} /></>,
  <><path d="M15 1 H25.500 V12 H15 Z M1 17 H12 V25 H1 Z M15 17 V14" stroke={GS} strokeWidth="1.400" /><path d="M7 13 H12 V5 Z" fill={BF} stroke={BS} strokeWidth="1.400" /><path d="M14 15 H28 V17 L23 22 V28 H19 V22 L14 17 Z" fill={W} stroke={D} strokeWidth="1.500" /><Bolt x={-1} y={-1} s={0.600} /></>,
  <><path d="M10 1 H27 V12 L23 11 L25 7 L20 8 L18 14 L13 15 L13 20 L8 21 L11 26 L17 22 L20 26 H2 V16" fill={BF} stroke={BS} strokeWidth="1.600" /><path d="M0 1 Q0 -0.500 1.500 -0.500 H7.500 Q9 -.500 9 1 V9 L4.500 15 L0 9 Z" fill="#e06c00" /><circle cx="4.500" cy="5" r="2" fill="#fff" /><circle cx="24.500" cy="24" r="4" fill="#e06c00" /><circle cx="27.500" cy="16.500" r="2.200" fill="#e06c00" /></>,
  <g stroke="#9333a0" strokeWidth="1.500" strokeLinejoin="round">
    <path d="M12 2 L1 13 Q0.500 14 1 15 L12 26 H16.500 L27 15 Q27.500 14 27 13 L16.500 2 Z" />
    <path d="M12 2 L15.500 5.500 L11 10 Q10 12 11.500 14 L16 18 L11.500 21.500 L16.500 26 M16.500 2 L13.500 4.500 M11.500 14 L20.500 6 M16 18 L24 10 M15.500 11 L23 18.500 M11.500 21.500 L16 18 L20 22" />
  </g>,
  <g stroke="#1a73c9" strokeWidth="1.500" strokeLinejoin="round">
    <path d="M1 3 H18 L27 13.500 L18 24.500 H1 L10 13.500 Z" />
    <path d="M9 3 L16.500 11.500 L7 24.500 M1 24.500 L18 3 M9.500 24.500 L22.500 8.500" />
  </g>,
];

function FiltersRail() {
  return (
    <div className="flex h-[799px] w-[49px] shrink-0 flex-col items-center border-l border-[#a6a4a2] bg-white">
      <div className="mt-5"><DoubleChevron flip /></div>
      <Svg w={18} h={18} className="mt-[23px] ml-[6px]" stroke="#252423" strokeWidth="1.600"><path d="M17 1 V17 L7 12 H1 V7 H7 Z" /></Svg>
      <div className="mt-[12px] text-[21.500px] leading-[24px] font-semibold tracking-[0.15px] text-[#252423] [writing-mode:vertical-rl]">Filters</div>
    </div>
  );
}

function Toggle({ on }) {
  return on ? (
    <div className="flex h-6 w-12 items-center justify-between rounded-full bg-[#117865] pr-[7px] pl-[7px] text-[13.500px] text-white">
      <span className="mt-[1px]">On</span><span className="h-3 w-3 rounded-full bg-white" />
    </div>
  ) : (
    <div className="flex h-6 w-12 items-center justify-between rounded-full border border-[#8a8886] bg-white pr-[5px] pl-[6px] text-[13.500px] text-[#605e5c]">
      <span className="h-3 w-3 rounded-full bg-[#605e5c]" /><span className="mt-[1px]">Off</span>
    </div>
  );
}

function VizPane() {
  return (
    <section className="flex w-[271px] shrink-0 flex-col border-l border-[#d8d6d4] bg-[#f3f2f1] text-[17px] text-[#252423]">
      <div className="mt-[14px] flex h-[31px] items-center justify-between pr-[12px] pl-[12px]">
        <h2 className="text-[22.800px] leading-[31px] font-semibold tracking-[-0.2px]">Visualizations</h2>
        <DoubleChevron />
      </div>
      <div className="mt-[11px] pl-[12px] leading-[24px] font-semibold tracking-[-0.1px]">Build visual</div>
      <div className="mt-[6px] flex pl-3">
        <div className="flex h-12 w-12 items-center justify-center rounded-[3px] bg-[#d2d0ce]">
          <Svg w={36} h={36}>
            <path d="M0 1 H29" stroke="#252423" strokeWidth="1.800" />
            <rect x="1" y="9" width="34" height="10" fill="#117865" stroke="#252423" strokeWidth="2" strokeDasharray="3 2" />
            <rect x="1" y="25" width="34" height="10" fill="#117865" stroke="#252423" strokeWidth="2" strokeDasharray="3 2" />
          </Svg>
        </div>
        <Svg w={36} h={36} className="mt-[6px] ml-[57px]" stroke="#252423" strokeWidth="1.600">
          <path d="M7 35 H1 V1 H16 L26 11 V15 M15.500 1 V12 H26" />
          <path d="M18 26 L34 13.500 C36 13 36 14 35 15.500 L23 30.500 Z M18 26 C14 26 14 32 9 34 C15 36 23 36 23 30.500" fill="#f3f2f1" />
        </Svg>
      </div>
      <Svg w={270} h={14} className="mt-[6px]" stroke="#8a8886" strokeWidth="1.300"><path d="M0 13 H24 L36 1 L48 13 H270" /></Svg>
      <div className="mt-[16px] grid grid-cols-[repeat(6,28px)] gap-[14px] pl-4">
        {vizIcons.map((icon, i) => <Svg key={i} w={28} h={28}>{icon}</Svg>)}
      </div>
      <div className="mt-[16px] ml-[19px] flex h-4 items-center gap-[6px]">
        {[0, 1, 2].map((i) => <span key={i} className="h-[3px] w-[3px] rounded-full bg-[#252423]" />)}
      </div>
      <div className="mt-[23px] border-t border-[#dddbd9]" />
      <div className="mt-[13px] pl-[18px] leading-[24px]">Values</div>
      <div className="mt-[8px] ml-[6px] h-[42px] w-[255px] rounded-[3px] border border-dashed border-[#c8c6c4] bg-white pl-[15px] leading-[38px] tracking-[0.05px]">Add data fields here</div>
      <div className="mt-[16px] pl-[18px] leading-[24px] font-semibold text-[#484644]">Drill through</div>
      <div className="mt-[13px] flex h-6 items-center justify-between pr-[33px] pl-[18px]">Cross-report<Toggle /></div>
      <div className="mt-4 flex h-6 items-center justify-between pr-[33px] pl-[18px]">Keep all filters<Toggle on /></div>
      <div className="mt-[15px] ml-[6px] h-[38px] w-[255px] rounded-[3px] border border-dashed border-[#c8c6c4] bg-white pl-[12px] leading-[38px] tracking-[0.12px] whitespace-nowrap">Add drill-through fields here</div>
    </section>
  );
}

const fields = [
  ["% of PHEV", "m"], ["2020 Census T...", "s"], ["Avg Range", "m"], ["Base MSRP", "s"], ["BEV Vehicles", "m"],
  ["City"], ["Clean Alternat..."], ["DOL Vehicle ID", "s"], ["Electric Range", "s"], ["Electric Utility"],
  ["Electric Vehicl..."], ["Legislative Dis...", "s"], ["Make"], ["Model"], ["Model Year", "s"],
  ["PHEV Vehicles", "m"], ["Postal Code", "s"], ["State"], ["Total Vehicles", "m"], ["Vehicle Locati..."],
];

function FieldIcon({ kind }) {
  if (kind === "m")
    return (
      <Svg w={18} h={22} stroke="#252423" strokeWidth="1.700">
        <rect x="1" y="1" width="16" height="20" rx="3" /><rect x="4.500" y="4.500" width="9" height="4" rx="1" strokeWidth="1.500" />
        <g fill="#252423" stroke="none">
          {[12.500, 17].map((y) => [5, 9, 13].map((x) => <circle key={`${x}${y}`} cx={x} cy={y} r="1.300" />))}
        </g>
      </Svg>
    );
  if (kind === "s")
    return <Svg w={18} h={18} stroke="#252423" strokeWidth="1.600"><path d="M16.500 1 H2 L9.500 9 L2 17 H16.500" /></Svg>;
  return null;
}

function DataPane() {
  return (
    <section className="flex min-w-0 flex-1 flex-col border-l border-[#d8d6d4] bg-[#f3f2f1] text-[#252423]">
      <div className="mt-[14px] flex h-[31px] items-center justify-between pr-[10px] pl-[12px]">
        <h2 className="text-[22.800px] leading-[31px] font-semibold tracking-[-0.2px]">Data</h2>
        <DoubleChevron />
      </div>
      <div className="mt-[23px] ml-[6px] flex h-9 w-[258px] items-center rounded-[5px] border border-[#d2d0ce] border-b-[#605e5c] bg-white pl-[18px] text-[19.200px] text-[#6b6968]">
        <Svg w={22} h={22} className="mr-[9px] -mt-[2px]" stroke="#605e5c" strokeWidth="1.500"><circle cx="9" cy="9" r="8" /><path d="M15 15 L21.500 21.500" /></Svg>
        <span className="mt-[3px] tracking-[0.15px]">Search</span>
      </div>
      <div className="mt-[15px] flex justify-between pr-[4px]">
        <ul className="w-[252px] text-[17px]">
          {fields.map(([name, kind]) => (
            <li key={name} className="flex h-9 items-center pl-[66px] whitespace-nowrap">
              <span className="h-[18px] w-[18px] shrink-0 rounded-[3px] border border-[#8a8886]" />
              <span className="ml-3 w-[27px] shrink-0"><FieldIcon kind={kind} /></span>
              <span className="mt-[1px]">{name}</span>
            </li>
          ))}
        </ul>
        <div className="mt-[62px] h-[659px] w-3 bg-[#8a8886]" />
      </div>
    </section>
  );
}

function StatusBar() {
  return (
    <div className="flex h-[35px] shrink-0 items-center border-t border-[#d8d6d4] bg-[#f3f2f1] pl-[6px] text-[17px] text-[#484644]">
      <span className="mt-[3px] tracking-[0.12px]">Page 1 of 1</span>
      <Svg w={182} h={20} className="ml-auto" stroke="#605e5c" strokeWidth="1.300">
        <path d="M0 10 H6" strokeWidth="2" /><path d="M13 10 H163 M88 6 V14" /><path d="M49.500 1 V18" strokeWidth="5" /><path d="M172 9.500 H182 M177 4.500 V14.500" strokeWidth="1.800" />
      </Svg>
      <span className="ml-[21px] w-[39px] text-[16.500px] tracking-[-0.1px] text-[#605e5c]">53%</span>
      <Svg w={24} h={18} className="mt-[2px] mr-[25px] ml-6" stroke="#605e5c" strokeWidth="1.600">
        <path d="M1 1 H23 V17 H1 Z M4.500 7 V4.500 H8 M16 4.500 H19.500 V7 M19.500 11 V13.500 H16 M8 13.500 H4.500 V11" />
      </Svg>
    </div>
  );
}

/* ---------- taskbar ---------- */

function TaskbarApp({ children, dot, active }) {
  return (
    <div className="flex w-[66px] shrink-0 justify-center">
      <div className={`flex h-[60px] w-[59px] flex-col items-center pt-[12px] ${active ? "rounded-md bg-[#2b303a] shadow-[inset_0_0_0_1px_rgba(255,255,255,0.06)]" : ""}`}>
        {children}
        {dot && <div className="mt-[7px] h-[5px] w-2 rounded-full bg-[#9a9ca1]" />}
        {active && <div className="mt-[6px] h-[5px] w-6 rounded-full bg-[#d99be0]" />}
      </div>
    </div>
  );
}

function Taskbar() {
  return (
    <footer className="flex h-[72px] shrink-0 items-start border-t border-black bg-[linear-gradient(to_right,#1a2332_0%,#14253b_14%,#14253b_28%,#1a2433_40%,#211f29_50%,#1c232b_58%,#211f29_64%,#1c232b_72%,#1b222b_100%)] pt-[6px] text-[17px] text-white shadow-[inset_0_2px_0_#44474e]">
      <div className="flex w-[500px] pl-[30px]">
        <Svg w={46} h={48}>
          <defs><linearGradient id="sun" x1="0" y1="0" x2="1" y2="1"><stop stopColor="#fbb62c" /><stop offset="1" stopColor="#f2740f" /></linearGradient>
            <linearGradient id="cl" x1="0" y1="0" x2="0" y2="1"><stop stopColor="#8fb7f5" /><stop offset="1" stopColor="#dbe9fd" /></linearGradient></defs>
          <circle cx="17" cy="28" r="15" fill="url(#sun)" />
          <path d="M11 47.500 C3 47.500 3 38 10 37 C11 28 25 27 27 35 C37 35 37 47.500 28 47.500 Z" fill="url(#cl)" />
          <circle cx="27.500" cy="15.500" r="12" fill="#ff99a3" />
          <text x="27.500" y="21" textAnchor="middle" fontSize="15" fontFamily="Open Sans, sans-serif" fill="#111">2</text>
        </Svg>
        <div className="pt-[6px] leading-6"><div>32°C</div><div className="text-[#d5d8dd]">Partly sunny</div></div>
      </div>
      <Svg w={35} h={35} className="mt-[13px]">
        <defs><linearGradient id="win" x1="0" y1="0" x2="1" y2="1"><stop stopColor="#7fdcfd" /><stop offset="1" stopColor="#0a93f5" /></linearGradient></defs>
        <path d="M0 0 H17 V17 H0 Z M18.500 0 H35 V17 H18.500 Z M0 18.500 H17 V35 H0 Z M18.500 18.500 H35 V35 H18.500 Z" fill="url(#win)" />
      </Svg>
      <div className="mt-[6px] ml-5 flex h-12 w-[330px] items-center rounded-full border border-[#4d5765] bg-[#3a4452] pl-[17px] text-[19.300px] text-[#d0d4da]">
        <Svg w={22} h={22} stroke="#fff" strokeWidth="2.200"><circle cx="9.500" cy="9.500" r="8.300" /><path d="M15 16 L21 22" /></Svg>
        <span className="mt-[2px] ml-[17px]">Search</span>
        <Svg w={46} h={40} className="mr-[18px] ml-auto">
          <path d="M23 0 L25 10 L31 0 L31 10 L40 4 L37 13 L46 15 L38 20 L46 26 L37 27 L42 37 L32 32 L29 40 L23 34 L17 40 L14 32 L4 37 L9 27 L0 26 L8 20 L0 15 L9 13 L6 4 L15 10 L15 0 L21 10 Z" fill="#e8bf3c" />
          <path d="M15 14 C8 10 3 14 4 21 C5 27 9 30 16 27 Z" fill="#e89a6c" /><path d="M31 14 C38 10 43 14 42 21 C41 27 37 30 30 27 Z" fill="#e89a6c" />
          <path d="M14 14 C15 8 31 8 32 14 C33 21 29.500 25 28.500 29 C28 34 28 40 22.500 39 C18 38 18 33 18 29 C16.500 24 13 21 14 14 Z" fill="#f0ac7b" />
          <path d="M16 10 L18 6 L23 0 L28 6 L30 10 Q23 7 16 10 Z" fill="#e35d4f" /><circle cx="23" cy="6.500" r="1.800" fill="#1c9fd8" /><circle cx="18.800" cy="8" r="1" fill="#f6d34b" /><circle cx="27.200" cy="8" r="1" fill="#f6d34b" />
          <circle cx="18.500" cy="18.500" r="1.100" fill="#3b2015" /><circle cx="27.500" cy="18.500" r="1.100" fill="#3b2015" /><path d="M23 11 V16 M21 12.500 H25" stroke="#d2402e" strokeWidth="1.300" />
          <path d="M20 26 H26 M20.500 29.500 H26 M21 33 H26" stroke="#c97748" strokeWidth="1" /><path d="M17.500 25 L15 28 M28.500 25 L31 28" stroke="#fff" strokeWidth="1.800" />
        </Svg>
      </div>
      <div className="ml-[3px] flex">
        <TaskbarApp>
          <Svg w={36} h={36}><rect x="0" y="11" width="27" height="24" rx="2" fill="#5c5e61" /><rect x="9" y="1" width="27" height="25" rx="2" fill="#f3f3f3" /><path d="M9 11 H27 V26 H11 Q9 26 9 24 Z" fill="#b9babc" /></Svg>
        </TaskbarApp>
        <TaskbarApp>
          <Svg w={36} h={36}>
            <path d="M18 18 L2.400 9 A18 18 0 0 1 33.600 9 Z" fill="#e33b2e" />
            <path d="M33.600 9 A18 18 0 0 1 18 36 L25.800 22.500 L18 9 Z" fill="#fbc116" />
            <path d="M2.400 9 A18 18 0 0 0 18 36 L25.800 22.500 H10.200 Z" fill="#2da94f" />
            <circle cx="18" cy="18" r="9" fill="#fff" /><circle cx="18" cy="18" r="7" fill="#2f7de9" />
          </Svg>
        </TaskbarApp>
        <TaskbarApp>
          <Svg w={36} h={36}>
            <path d="M2 34.500 L4.500 25.500 A15.500 15.500 0 1 1 10.500 31.500 Z" stroke="#25d366" strokeWidth="3.200" />
            <path d="M12.500 10 C9 12 10 17 14.500 21.500 C19 26 24 27.500 26 24 C26.500 22.500 26 22 22 20 C20.500 20 20 22.500 18.500 22 C16 20.500 15 19 14 17 C14 16 16 15 15.500 13.500 C14.500 10.500 14 9.500 12.500 10 Z" fill="#25d366" />
            <circle cx="32" cy="5" r="12" fill="#d99be0" /><text x="32" y="10.500" textAnchor="middle" fontSize="15" fontFamily="Open Sans, sans-serif" fill="#111">1</text>
          </Svg>
        </TaskbarApp>
        <TaskbarApp dot>
          <Svg w={36} h={36}><path d="M0 4 Q0 2 2 2 H12 L15 5 V10 H0 Z" fill="#e09a12" /><path d="M0 7 H13 L16 5 H34 Q36 5 36 7 V34 H0 Z" fill="#fcce45" /><path d="M6 35 V29 Q6 24 10 24 H26 Q30 24 30 29 V35 Z" fill="#1272c9" /><path d="M11 29.500 H25" stroke="#0b4f96" strokeWidth="1.800" /></Svg>
        </TaskbarApp>
        <TaskbarApp>
          <Svg w={36} h={36}><rect width="36" height="36" rx="5" fill="#000" /><path d="M5.500 22 V26 M10.500 17 V26 M15.500 13 V26 M20.500 8 V26 M25.500 14 V26 M30.500 20 V26" stroke="#fff" strokeWidth="2.500" strokeLinecap="round" /></Svg>
        </TaskbarApp>
        <TaskbarApp>
          <Svg w={36} h={36}>
            <path d="M0 2 L2 0 H20 L25 4 V20 L4 34 L0 28 Z" fill="#14c4f2" /><path d="M22 3 L30 5 L33 13 L31 20 L36 33 L32 36 H10 L4 32 L20 20 Z" fill="#f0e62c" /><path d="M22 3 L30 5 L32 14 L20 22 Z M4 32 L12 28 L22 34 L10 36 Z" fill="#27d98b" />
            <rect x="7" y="7" width="22" height="22" fill="#000" /><text x="9" y="18" fontSize="11" fontWeight="700" fontFamily="Open Sans, sans-serif" fill="#fff">PC</text><path d="M10 25.500 H18" stroke="#fff" strokeWidth="1.800" />
          </Svg>
        </TaskbarApp>
        <TaskbarApp active>
          <Svg w={36} h={36}><rect x="19" y="0" width="12" height="36" fill="#dd9b12" /><rect x="11" y="9" width="12" height="27" fill="#f0bf35" /><rect x="4" y="18" width="12" height="18" fill="#f9de6f" /></Svg>
        </TaskbarApp>
        <TaskbarApp dot>
          <Svg w={36} h={36}>
            <path d="M7 1 H22 L31 7 L30 14 L27 27 L18 36 L8 27 L3 10 Z" fill="#f4441c" />
            <path d="M9 9 L14 10 L17.500 9 L21 10 L26 9 L28 14 L24 19 L25 24 L17.500 30 L10 24 L11 19 L7 14 Z" fill="#fff" /><path d="M9 14.500 L15 16 L14 19 M26 14.500 L20 16 L21 19 M17.500 16 V21 M12 24 L17.500 22 L23 24" stroke="#f4441c" strokeWidth="1.700" />
            <circle cx="31" cy="5" r="11.500" fill="#d3266a" />
            <path d="M31 5 C33 2 36 5 34 8 C31 12 25 9 26 4 C27 -2 36 -4 40 3 M22 12 C27 17 38 15 40.500 8 M20 7 C19.500 1 23 -4 29 -5.500" stroke="#f6dcea" strokeWidth="2.200" />
          </Svg>
        </TaskbarApp>
      </div>
      <div className="ml-auto flex pt-[4px]">
        <Svg w={16} h={9} className="mt-[21px]" stroke="#fff" strokeWidth="1.800"><path d="M0.500 8.500 L8 1 L15.500 8.500" /></Svg>
        <Svg w={24} h={16} className="mt-[17px] ml-[28px]"><path d="M5 16 C-2 15 -1 7 5 6 C7 -1 17 -1 18 6 C25 7 26 15 19 16 Z" fill="#a9acb0" /><path d="M4 16 C0 15 0 11 4 10 L14 6 L24 11 C24 15 22 16 19 16 Z" fill="#fff" /></Svg>
        <div className="mt-[4px] ml-[28px] w-[34px] text-center leading-[23px]">ENG<br />IN</div>
        <Svg w={24} h={19} className="mt-[16px] ml-[28px]" stroke="#fff" strokeWidth="1.700"><path d="M1 7 C7 0 17 0 23 7 M4.500 10.500 C9 5.500 15 5.500 19.500 10.500 M8 14 C10.500 11.500 13.500 11.500 16 14" /><circle cx="12" cy="17" r="1.700" fill="#fff" stroke="none" /></Svg>
        <Svg w={24} h={20} className="mt-[15px] ml-3" stroke="#fff" strokeWidth="1.500"><path d="M1 7 H4.500 L10 1.500 V18.500 L4.500 13 H1 Z M13.500 7 Q15.500 10 13.500 13 M16.500 4 Q20.500 10 16.500 16 M19.500 1 Q26 10 19.500 19" /></Svg>
        <Svg w={25} h={20} className="mt-[14px] ml-3" stroke="#fff" strokeWidth="1.600"><rect x="3" y="6" width="17" height="12" rx="2.500" /><rect x="5.500" y="8.500" width="12" height="7" fill="#fff" stroke="none" /><path d="M22.500 10 V14" strokeWidth="2.500" /><path d="M5 -2 L0 7 H4 L2 13 L9 4 H5 Z" fill="#fff" stroke="#1c232b" strokeWidth=".8" /></Svg>
        <div className="mt-[2px] mr-[27px] ml-[22px] w-[95px] text-right text-[17.300px] leading-[23.500px] whitespace-nowrap tracking-[0.15px]">18:42<br />27-08-2025</div>
      </div>
    </footer>
  );
}

export default function App() {
  return (
    <div className="flex h-[1199px] w-[1918px] flex-col overflow-hidden bg-[#f3f2f1] font-['Open_Sans','Noto_Sans',sans-serif]">
      <TitleBar />
      <Ribbon />
      <main className="flex h-[852px] shrink-0">
        <SideNav />
        <div className="flex w-[1268px] shrink-0 flex-col">
          <div className="h-[799px] bg-white pt-[98px] pl-[129px]"><Report /></div>
          <PageTabs />
        </div>
        <FiltersRail />
        <VizPane />
        <DataPane />
      </main>
      <StatusBar />
      <Taskbar />
    </div>
  );
}
